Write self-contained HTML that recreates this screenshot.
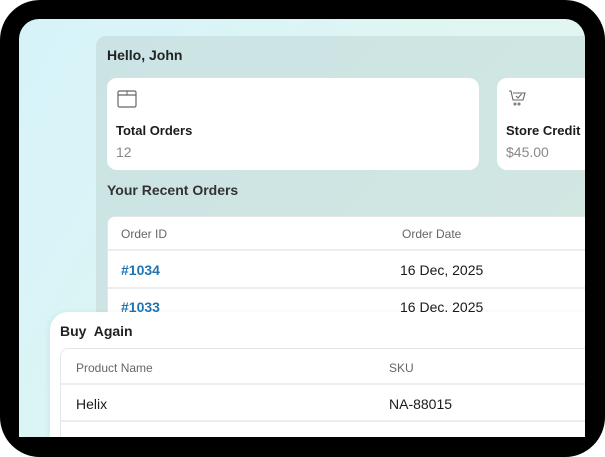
<!DOCTYPE html>
<html><head><style>
*{margin:0;padding:0;box-sizing:border-box}
html,body{width:605px;height:457px;overflow:hidden}
body{background:#fff;font-family:"Liberation Sans",sans-serif;position:relative}
.frame{position:absolute;left:0;top:0;width:605px;height:457px;background:#000;border-radius:40px}
.screen{position:absolute;left:19px;top:19px;width:566px;height:418px;border-radius:20px 20px 0 0;overflow:hidden;background:linear-gradient(120deg,#d6f3fb 0%,#def6f2 50%,#e6f6ee 100%)}
.panel{position:absolute;left:77px;top:17px;width:489px;height:401px;background:linear-gradient(135deg,#cbe3e5,#d4e8e0);border-radius:10px 0 0 0;overflow:hidden}
.abs{position:absolute}
.card{position:absolute;background:#fff;border-radius:10px}
.t{font-size:14px;color:#1b1b1b;font-weight:bold}
.tbl{position:absolute;background:#fff;border:1px solid #e4e6e6;border-radius:8px}
.row{position:absolute;left:0;right:0;border-bottom:2px solid #eceeee}
.hd{font-size:12px;color:#666}
.cell{font-size:14px;color:#1a1a1a}
.link{font-size:14px;color:#1f75b4;font-weight:bold}
.buy{position:absolute;left:31px;top:293px;width:535px;height:125px;background:#fff;border-radius:18px 0 0 0;box-shadow:-2px 0 6px rgba(0,0,0,.05);overflow:hidden}
</style></head><body>
<div class="frame"></div>
<div class="screen">
 <div class="panel">
  <div class="abs t" style="left:11px;top:11px;color:#222">Hello, John</div>
  <div class="card" style="left:11px;top:42px;width:372px;height:92px">
   <svg class="abs" style="left:10px;top:12px" width="20" height="18" viewBox="0 0 20 18"><rect x="1" y="1" width="18" height="16" rx="1.5" fill="none" stroke="#666" stroke-width="1.2"/><line x1="1" y1="5" x2="19" y2="5" stroke="#666" stroke-width="1.2"/><line x1="10" y1="1" x2="10" y2="5" stroke="#666"/></svg>
   <div class="abs t" style="left:9px;top:45px;font-size:13px">Total Orders</div>
   <div class="abs" style="left:9px;top:66px;font-size:14px;color:#888">12</div>
  </div>
  <div class="card" style="left:401px;top:42px;width:200px;height:92px">
   <svg class="abs" style="left:11px;top:11px" width="20" height="20" viewBox="0 0 20 20"><path d="M1 2h2l2 9h10l2-7H5" fill="none" stroke="#666" stroke-width="1.1"/><path d="M8 7l2 2L13.5 5" fill="none" stroke="#666" stroke-width="1.1"/><circle cx="7" cy="15" r="1" fill="none" stroke="#666"/><circle cx="11" cy="15" r="1" fill="none" stroke="#666"/></svg>
   <div class="abs t" style="left:9px;top:45px;font-size:13px">Store Credit</div>
   <div class="abs" style="left:9px;top:66px;font-size:14px;color:#888">$45.00</div>
  </div>
  <div class="abs t" style="left:11px;top:146px;font-size:14px;color:#333">Your Recent Orders</div>
  <div class="tbl" style="left:11px;top:180px;width:520px;height:230px">
   <div class="row" style="top:0;height:34px"><span class="abs hd" style="left:13px;top:10px">Order ID</span><span class="abs hd" style="left:294px;top:10px">Order Date</span></div>
   <div class="row" style="top:34px;height:38px"><span class="abs link" style="left:13px;top:11px">#1034</span><span class="abs cell" style="left:292px;top:11px">16 Dec, 2025</span></div>
   <div class="row" style="top:72px;height:38px"><span class="abs link" style="left:13px;top:10px">#1033</span><span class="abs cell" style="left:292px;top:10px">16 Dec. 2025</span></div>
  </div>
 </div>
 <div class="buy">
  <div class="abs t" style="left:10px;top:11px;font-size:14px;color:#222">Buy&nbsp; Again</div>
  <div class="tbl" style="left:10px;top:36px;width:560px;height:120px;border-radius:8px 0 0 0">
   <div class="row" style="top:0;height:36px"><span class="abs hd" style="left:15px;top:12px">Product Name</span><span class="abs hd" style="left:328px;top:12px">SKU</span></div>
   <div class="row" style="top:36px;height:37px"><span class="abs cell" style="left:15px;top:11px">Helix</span><span class="abs cell" style="left:328px;top:11px">NA-88015</span></div>
   <div class="row" style="top:73px;height:37px;border:none"><span class="abs cell" style="left:15px;top:12px">Pleated Hat Make</span><span class="abs cell" style="left:328px;top:12px">NA-9015</span></div>
  </div>
 </div>
</div>
</body></html>
